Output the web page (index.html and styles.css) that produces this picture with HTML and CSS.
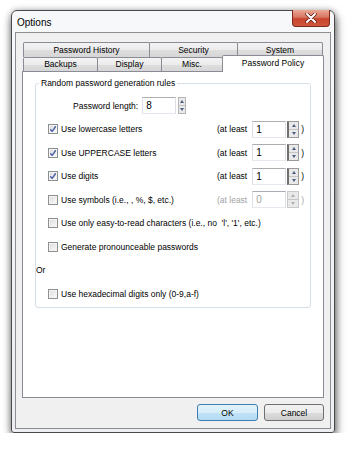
FILE: index.html
```html
<!DOCTYPE html>
<html lang="en">
<head>
    <meta charset="UTF-8">
    <title>Options</title>
    <link rel="stylesheet" href="styles.css">
</head>
<body>
    <div class="window">
        <div class="titlebar">
            <span class="title">Options</span>
            <div class="close">
                <svg width="12" height="10" viewBox="0 0 12 10">
                    <path d="M2 1 L10 9 M10 1 L2 9" stroke="#5a1a10" stroke-width="3.4" stroke-linecap="round"/>
                    <path d="M2 1 L10 9 M10 1 L2 9" stroke="#fff" stroke-width="2" stroke-linecap="round"/>
                </svg>
            </div>
        </div>

        <div class="client">
            <!-- tabs -->
            <div class="tabs">
                <div class="tabrow top">
                    <div class="tab t-history">Password History</div>
                    <div class="tab t-security">Security</div>
                    <div class="tab t-system">System</div>
                </div>
                <div class="tabrow">
                    <div class="tab t-backups">Backups</div>
                    <div class="tab t-display">Display</div>
                    <div class="tab t-misc">Misc.</div>
                    <div class="tab t-policy selected">Password Policy</div>
                </div>
            </div>

            <div class="panel">
                <fieldset class="group">
                    <legend>Random password generation rules</legend>

                    <div class="row len-row">
                        <span>Password length:</span>
                        <span class="num len">8</span>
                        <span class="spin narrow"><i class="up"></i><i class="dn"></i></span>
                    </div>

                    <div class="row">
                        <span class="opt wide"><span class="check on"></span>Use lowercase letters</span>
                        <span class="atleast">(at least</span>
                        <span class="num">1</span>
                        <span class="spin"><i class="up"></i><i class="dn"></i></span>
                        <span class="paren">)</span>
                    </div>

                    <div class="row">
                        <span class="opt wide"><span class="check on"></span>Use UPPERCASE letters</span>
                        <span class="atleast">(at least</span>
                        <span class="num">1</span>
                        <span class="spin"><i class="up"></i><i class="dn"></i></span>
                        <span class="paren">)</span>
                    </div>

                    <div class="row">
                        <span class="opt wide"><span class="check on"></span>Use digits</span>
                        <span class="atleast">(at least</span>
                        <span class="num">1</span>
                        <span class="spin"><i class="up"></i><i class="dn"></i></span>
                        <span class="paren">)</span>
                    </div>

                    <div class="row off">
                        <span class="opt wide"><span class="check"></span>Use symbols (i.e., , %, $, etc.)</span>
                        <span class="atleast">(at least</span>
                        <span class="num">0</span>
                        <span class="spin"><i class="up"></i><i class="dn"></i></span>
                        <span class="paren">)</span>
                    </div>

                    <div class="row">
                        <span class="opt"><span class="check"></span>Use only easy-to-read characters (i.e., no &nbsp;'l', '1', etc.)</span>
                    </div>

                    <div class="row">
                        <span class="opt"><span class="check"></span>Generate pronounceable passwords</span>
                    </div>

                    <div class="row or-row">Or</div>

                    <div class="row">
                        <span class="opt"><span class="check"></span>Use hexadecimal digits only (0-9,a-f)</span>
                    </div>
                </fieldset>
            </div>

            <div class="buttons">
                <button class="btn default">OK</button>
                <button class="btn">Cancel</button>
            </div>
        </div>
    </div>
</body>
</html>
```

FILE: styles.css
```css
body {
    margin: 0;
    background: #fff;
    font-family: "Liberation Sans", Arial, sans-serif;
    font-size: 8.5px;
    color: #000;
}
.window {
    box-sizing: border-box;
    margin: 10px 0 0 11px;
    width: 324px;
    height: 423px;
    padding: 0 3px 3px;
    border: 1px solid #4a4a4a;
    border-radius: 6px 6px 3px 3px;
    background: linear-gradient(#f7f8fa, #eceef1);
    box-shadow: 1px 5px 10px rgba(0, 0, 0, 0.6), 0 0 6px rgba(0, 0, 0, 0.25);
}
.titlebar {
    height: 21px;
    display: flex;
    justify-content: space-between;
    align-items: flex-start;
}
.title {
    font-size: 10px;
    line-height: 23px;
    padding-left: 2px;
}
.close {
    width: 38px;
    height: 17px;
    box-sizing: border-box;
    margin: -1px 1px 0 0;
    border: 1px solid #7d2a1b;
    border-top: none;
    border-radius: 0 0 4px 4px;
    background: linear-gradient(#e9a996, #d87661 45%, #c7452d 55%, #d0583c);
    display: flex;
    align-items: center;
    justify-content: center;
}
.client {
    box-sizing: border-box;
    height: 397px;
    border: 1px solid #8c8e91;
    background: #f0f0f0;
    padding: 9px 0 0 6px;
}

/* tabs */
.tabs {
    padding-left: 1px;
}
.tabrow {
    display: flex;
    align-items: flex-end;
}
.tab {
    box-sizing: border-box;
    height: 14px;
    margin-right: -1px;
    border: 1px solid #898c95;
    border-bottom: none;
    border-radius: 2px 2px 0 0;
    background: linear-gradient(#f3f3f3, #ebebeb 50%, #dedede 50%, #d6d6d6);
    text-align: center;
    line-height: 13px;
}
.tabrow.top .tab {
    height: 15px;
    line-height: 15px;
}
.tab.selected {
    position: relative;
    z-index: 1;
    height: 17px;
    margin-top: -2px;
    margin-bottom: -1px;
    background: #fff;
    line-height: 14px;
}
.t-history { width: 127px; }
.t-security { width: 89px; }
.t-system { width: 86px; }
.t-backups { width: 75px; }
.t-display { width: 65px; }
.t-misc { width: 62px; }
.t-policy { width: 102px; }

.panel {
    box-sizing: border-box;
    width: 302px;
    height: 327px;
    border: 1px solid #898c95;
    background: #fff;
    padding-top: 1px;
}
.group {
    box-sizing: border-box;
    width: 276px;
    margin: 5px 0 0 12px;
    padding: 6px 0 1px 0;
    border: 1px solid #d5dfe5;
    border-radius: 3px;
}
.group legend {
    margin-left: 3px;
    padding: 0 2px;
    line-height: 10px;
}
.row {
    display: flex;
    align-items: center;
    height: 23.5px;
    padding-left: 12px;
}
.len-row {
    padding-left: 37px;
}
.len-row .len {
    margin-left: 4px;
}
.or-row {
    padding-left: 0;
}
.opt {
    display: flex;
    align-items: center;
    gap: 3px;
    white-space: nowrap;
}
.opt.wide {
    width: 169px;
}
.check {
    box-sizing: border-box;
    width: 10px;
    height: 10px;
    border: 1px solid #8e8f8f;
    background: linear-gradient(135deg, #dcdcdc, #fbfbfb);
    box-shadow: inset 0 0 0 1px #f4f4f4;
}
.check.on {
    background: url("data:image/svg+xml,%3Csvg xmlns='http://www.w3.org/2000/svg' width='8' height='8'%3E%3Cpath d='M1.2 4.2 L3.2 6.4 L6.8 1.3' fill='none' stroke='%234f66a6' stroke-width='1.5'/%3E%3C/svg%3E") center no-repeat, linear-gradient(135deg, #dcdcdc, #fbfbfb);
}
.atleast {
    margin-right: 5px;
}
.num {
    box-sizing: border-box;
    width: 34px;
    height: 17px;
    padding-left: 3px;
    border: 1px solid #dbdfe6;
    border-top-color: #abadb3;
    border-bottom-color: #e3e9ef;
    font-size: 10px;
    line-height: 15px;
}
.spin {
    box-sizing: border-box;
    width: 12px;
    height: 17px;
    margin-left: 1px;
    border: 1px solid #9a9a9a;
    border-left: 2px solid #6f6f6f;
    background: #e9e9e9;
    display: flex;
    flex-direction: column;
}
.spin.narrow {
    width: 8px;
    margin-left: 2px;
    border: 1px solid #b5b5b5;
}
.spin i {
    flex: 1;
    display: flex;
    align-items: center;
    justify-content: center;
}
.spin i.up {
    border-bottom: 1px solid #c5c5c5;
}
.spin i::after {
    content: "";
    border-left: 2px solid transparent;
    border-right: 2px solid transparent;
}
.spin i.up::after {
    border-bottom: 3px solid #4c5f80;
}
.spin i.dn::after {
    border-top: 3px solid #4c5f80;
}
.paren {
    margin-left: 2px;
}
.row.off .atleast,
.row.off .num,
.row.off .paren {
    color: #a3a3a3;
}
.row.off .spin {
    border-left: 1px solid #b9b9b9;
    border-color: #c9c9c9;
}
.row.off .spin i::after {
    border-top-color: #b0b0b0;
    border-bottom-color: #b0b0b0;
}

/* buttons */
.buttons {
    width: 302px;
    display: flex;
    justify-content: flex-end;
    gap: 6px;
    margin-top: 6px;
}
.btn {
    box-sizing: border-box;
    width: 60px;
    height: 17px;
    padding: 0;
    border: 1px solid #707070;
    border-radius: 3px;
    background: linear-gradient(#f2f2f2, #ebebeb 50%, #dddddd 50%, #cfcfcf);
    font-family: "Liberation Sans", Arial, sans-serif;
    font-size: 8.5px;
    color: #000;
}
.btn.default {
    width: 61px;
    border-color: #3c7fb1;
    background: linear-gradient(#e3f3fc, #d6edfa 50%, #c1e3f8 50%, #b3dbf5);
}
```
